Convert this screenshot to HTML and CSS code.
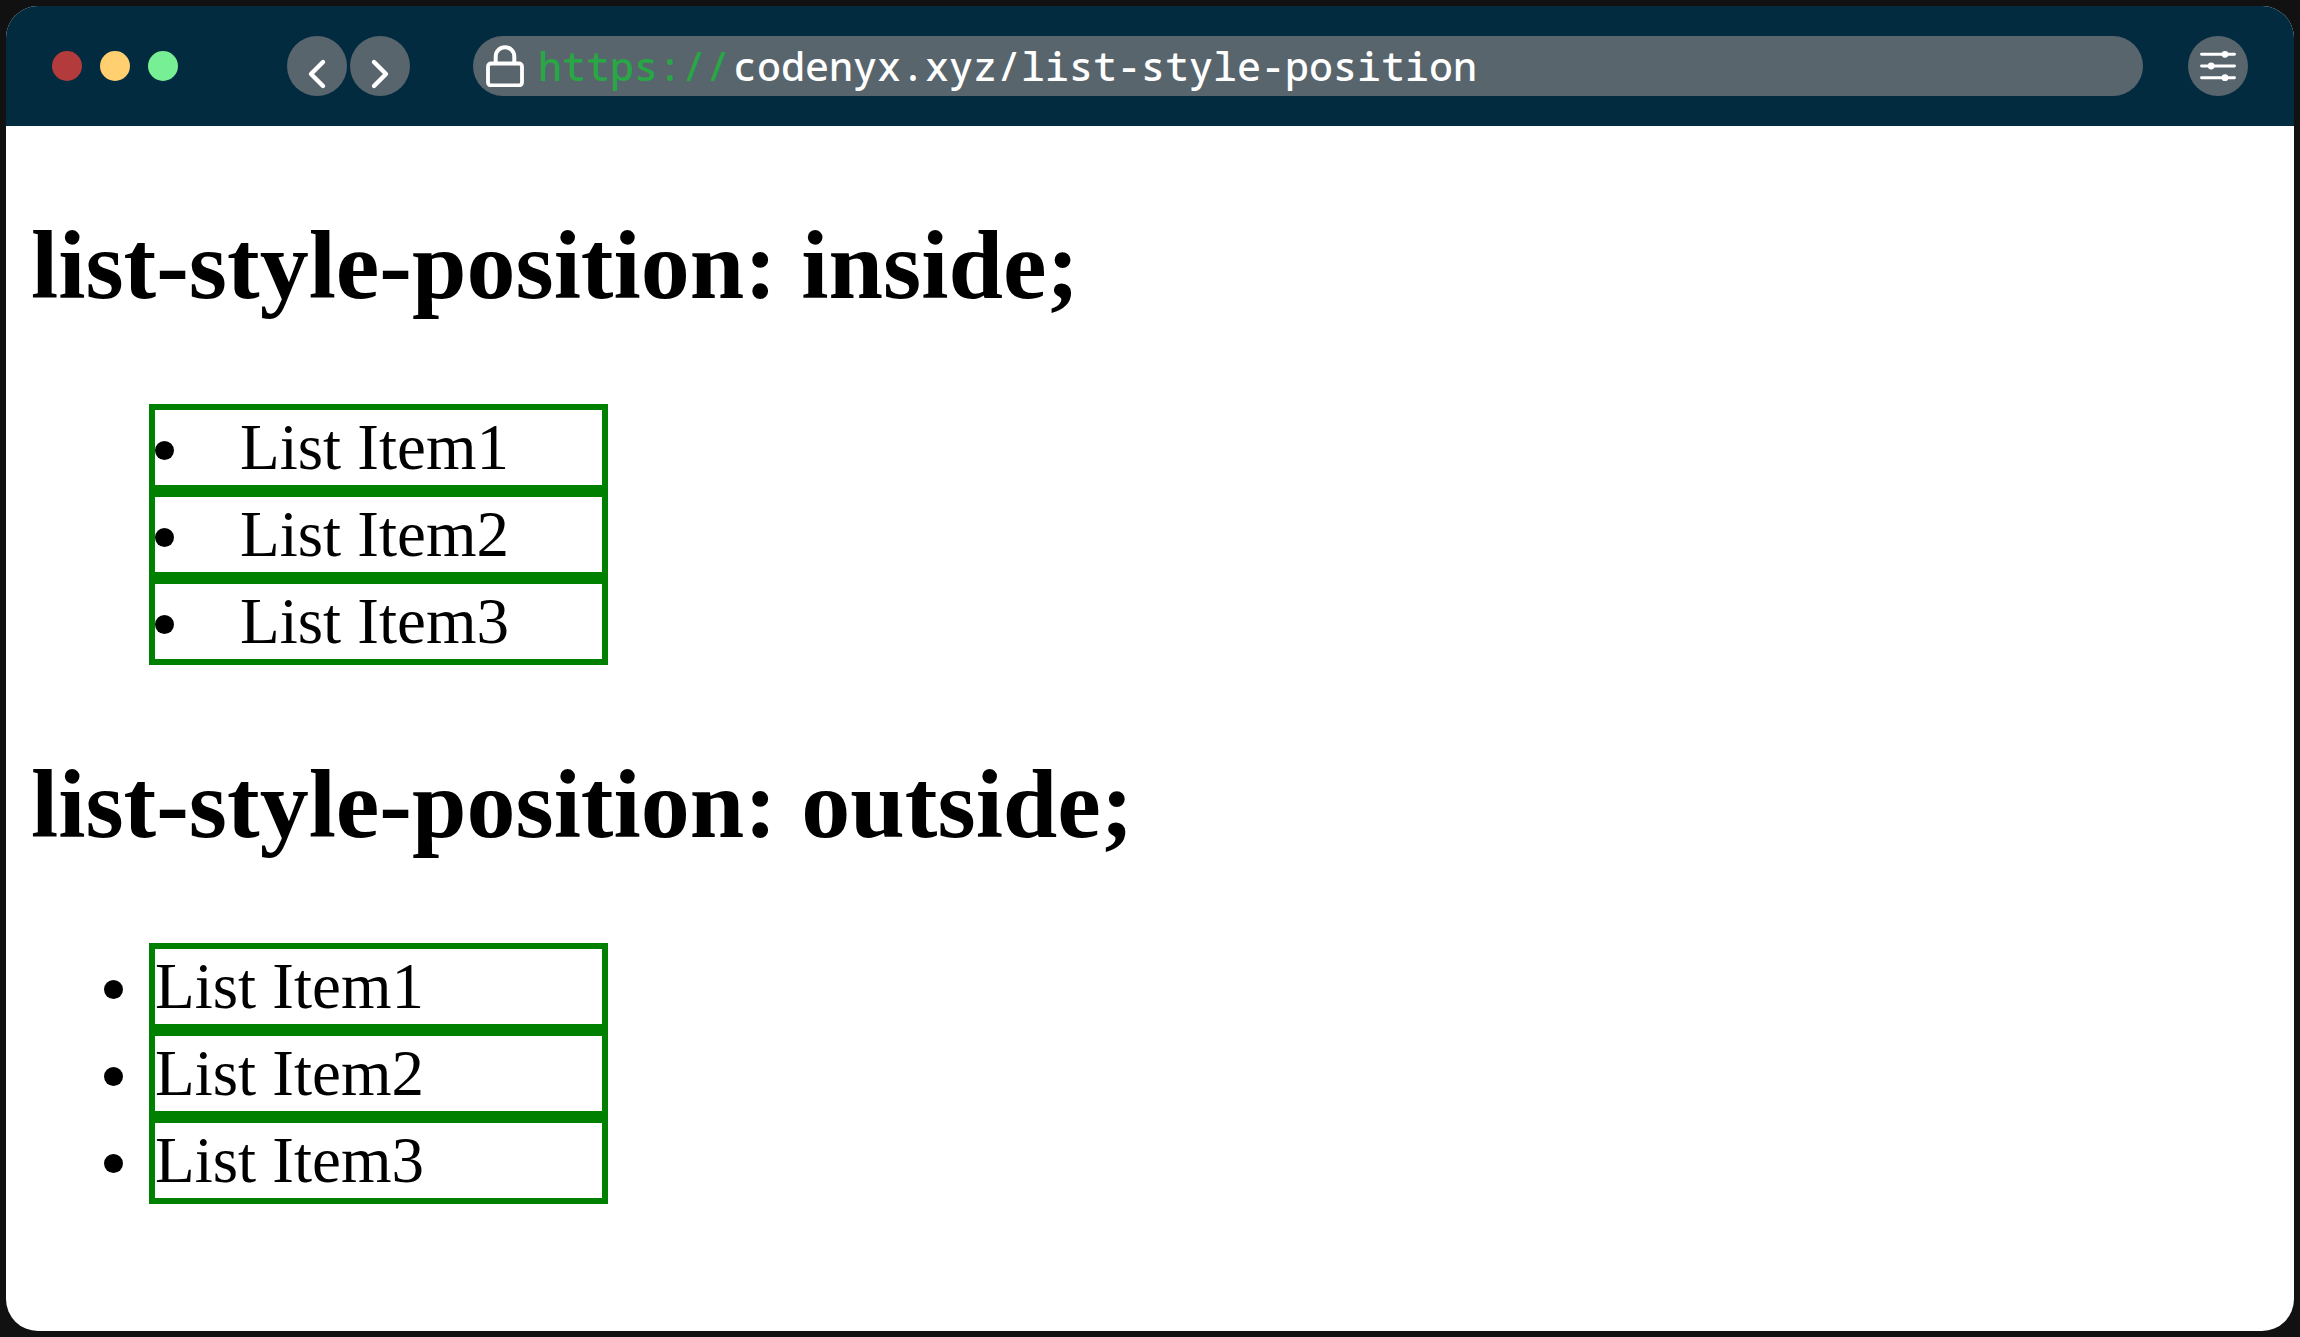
FILE: index.html
```html
<!DOCTYPE html>
<html lang="en">
<head>
<meta charset="utf-8">
<meta name="viewport" content="width=device-width, initial-scale=1">
<title>list-style-position</title>
<link rel="stylesheet" href="styles.css">
</head>
<body>
<div class="window">
  <header class="toolbar">
    <div class="lights">
      <span class="light light-close"></span>
      <span class="light light-minimize"></span>
      <span class="light light-expand"></span>
    </div>
    <nav class="history">
      <button class="round-button" type="button" aria-label="Back">
        <svg class="icon" viewBox="0 0 60 60"><path d="M36 26 24 38l12 12" stroke-width="4.4"/></svg>
      </button>
      <button class="round-button" type="button" aria-label="Forward">
        <svg class="icon" viewBox="0 0 60 60"><path d="M24 26l12 12-12 12" stroke-width="4.4"/></svg>
      </button>
    </nav>
    <div class="address">
      <svg class="lock" viewBox="0 0 38 42"><rect x="2" y="18.500" width="34" height="22" rx="3" stroke-width="3.800"/><path d="M9.700 18v-6.500a9.300 9.300 0 0 1 18.600 0v6.500" stroke-width="4"/></svg>
      <label class="scheme" for="url">https://</label>
      <input class="url" id="url" type="text" value="codenyx.xyz/list-style-position" spellcheck="false">
    </div>
    <button class="round-button" type="button" aria-label="Settings">
      <svg class="icon" viewBox="0 0 60 60"><path d="M13.500 18.300h33M13.500 30h33M13.500 41.700h33" stroke-width="2.900"/><g class="knobs"><circle cx="37" cy="18.300" r="3.400"/><circle cx="23.200" cy="30" r="3.400"/><circle cx="37" cy="41.700" r="3.400"/></g></svg>
    </button>
  </header>
  <main class="page">
    <h1 class="title">list-style-position: inside;</h1>
    <ul class="list list-inside">
      <li class="item">List Item1</li>
      <li class="item">List Item2</li>
      <li class="item">List Item3</li>
    </ul>
    <h1 class="title">list-style-position: outside;</h1>
    <ul class="list list-outside">
      <li class="item">List Item1</li>
      <li class="item">List Item2</li>
      <li class="item">List Item3</li>
    </ul>
  </main>
</div>
</body>
</html>
```
FILE: styles.css
```css
* {
  box-sizing: border-box;
}

body {
  margin: 0;
  padding: 6px;
  background: #111;
}

.window {
  min-height: calc(100vh - 12px);
  overflow: hidden;
  border-radius: 32px;
  background: #fff;
}

.toolbar {
  display: flex;
  align-items: center;
  height: 120px;
  padding: 0 46px;
  background: #022b40;
}

.lights {
  display: flex;
  gap: 18px;
  margin-right: 109px;
}

.light {
  width: 30px;
  height: 30px;
  border-radius: 50%;
}

.light-close {
  background: #b33b3b;
}

.light-minimize {
  background: #ffcf70;
}

.light-expand {
  background: #77ef95;
}

.history {
  display: flex;
  gap: 3px;
  margin-right: 63px;
}

.round-button {
  flex: none;
  width: 60px;
  height: 60px;
  padding: 0;
  border: 0;
  border-radius: 50%;
  background: #58656d;
}

.icon,
.lock {
  display: block;
  fill: none;
  stroke: #fff;
  stroke-linecap: round;
  stroke-linejoin: round;
}

.icon {
  width: 60px;
  height: 60px;
}

.knobs {
  fill: #fff;
  stroke: none;
}

.address {
  display: flex;
  flex: 1;
  align-items: center;
  min-width: 0;
  height: 60px;
  margin-right: 45px;
  padding: 0 30px 0 13px;
  border-radius: 30px;
  background: #58656d;
}

.lock {
  flex: none;
  width: 38px;
  height: 42px;
  margin-right: 14px;
}

.scheme,
.url {
  font: 500 40px/60px "Noto Sans Mono", "DejaVu Sans Mono", monospace;
}

.scheme {
  margin-right: 3px;
  color: #28a745;
}

.url {
  flex: 1;
  min-width: 0;
  height: 60px;
  padding: 0;
  border: 0;
  outline: 0;
  background: none;
  color: #fff;
}

.page {
  display: flex;
  flex-direction: column;
  gap: 83px;
  padding: 83px 25px;
  color: #000;
  font-family: "Liberation Serif", "Times New Roman", serif;
}

.title {
  margin: 0;
  font-size: 98px;
  line-height: 112px;
}

.list {
  margin: 0;
  padding-left: 118px;
  font-size: 65px;
  line-height: 75px;
}

.list-inside {
  list-style-position: inside;
}

.list-outside {
  list-style-position: outside;
}

.item {
  width: 459px;
  border: 6px solid #008000;
}
```
